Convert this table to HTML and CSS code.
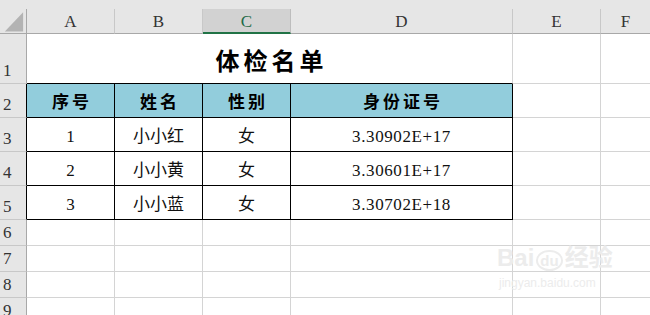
FILE: index.html
```html
<!DOCTYPE html>
<html lang="zh">
<head>
<meta charset="utf-8">
<title>体检名单</title>
<link rel="stylesheet" href="styles.css">
</head>
<body>
<div class="sheet">
  <div class="strip"></div>

  <div class="corner"><svg width="27" height="25" viewBox="0 0 27 25"><polygon points="24,3 24,23 5,23" fill="#b3b3b3"/></svg></div>
  <div class="colhead">A</div>
  <div class="colhead">B</div>
  <div class="colhead active">C</div>
  <div class="colhead">D</div>
  <div class="colhead">E</div>
  <div class="colhead last">F</div>

  <div class="rowhead">1</div>
  <div class="cell title tb">体检名单</div>
  <div class="cell"></div>
  <div class="cell last"></div>

  <div class="rowhead tl">2</div>
  <div class="cell hd tb">序号</div>
  <div class="cell hd tb">姓名</div>
  <div class="cell hd tb">性别</div>
  <div class="cell hd tb">身份证号</div>
  <div class="cell"></div>
  <div class="cell last"></div>

  <div class="rowhead tl">3</div>
  <div class="cell dt tb">1</div>
  <div class="cell dt tb">小小红</div>
  <div class="cell dt tb">女</div>
  <div class="cell dt num tb">3.30902E+17</div>
  <div class="cell"></div>
  <div class="cell last"></div>

  <div class="rowhead tl">4</div>
  <div class="cell dt tb">2</div>
  <div class="cell dt tb">小小黄</div>
  <div class="cell dt tb">女</div>
  <div class="cell dt num tb">3.30601E+17</div>
  <div class="cell"></div>
  <div class="cell last"></div>

  <div class="rowhead tl">5</div>
  <div class="cell dt tb">3</div>
  <div class="cell dt tb">小小蓝</div>
  <div class="cell dt tb">女</div>
  <div class="cell dt num tb">3.30702E+18</div>
  <div class="cell"></div>
  <div class="cell last"></div>

  <div class="rowhead">6</div>
  <div class="cell"></div><div class="cell"></div><div class="cell"></div><div class="cell"></div><div class="cell"></div><div class="cell last"></div>
  <div class="rowhead">7</div>
  <div class="cell"></div><div class="cell"></div><div class="cell"></div><div class="cell"></div><div class="cell"></div><div class="cell last"></div>
  <div class="rowhead">8</div>
  <div class="cell"></div><div class="cell"></div><div class="cell"></div><div class="cell"></div><div class="cell"></div><div class="cell last"></div>
  <div class="rowhead">9</div>
  <div class="cell"></div><div class="cell"></div><div class="cell"></div><div class="cell"></div><div class="cell"></div><div class="cell last"></div>

  <div class="watermark">
    <div class="wm-logo">Bai<span class="wm-du">du</span>经验</div>
    <div class="wm-url">jingyan.baidu.com</div>
  </div>
</div>
</body>
</html>
```

FILE: styles.css
```css
html, body {
  margin: 0;
  padding: 0;
  background: #ffffff;
  overflow: hidden;
}

.sheet {
  position: relative;
  width: 650px;
  height: 315px;
  overflow: hidden;
  display: grid;
  grid-template-columns: 27px 88px 88px 88px 222px 88px 1fr;
  grid-template-rows: 9px 25px 50px 34px 34px 34px 34px 26px 26px 26px 26px;
  font-family: "Liberation Serif", "Noto Sans CJK SC", serif;
  color: #000;
}

.strip {
  grid-column: 1 / -1;
  background: #e6e6e6;
}

.corner {
  background: #e6e6e6;
  border-right: 1px solid #a8a8a8;
  border-bottom: 1px solid #a8a8a8;
  box-sizing: border-box;
  display: flex;
}

.colhead {
  background: #e6e6e6;
  border-right: 1px solid #c8c8c8;
  border-bottom: 1px solid #a8a8a8;
  box-sizing: border-box;
  display: flex;
  align-items: center;
  justify-content: center;
  font-size: 17px;
  color: #333;
  padding-top: 2px;
}

.colhead.active {
  background: #d2d2d2;
  color: #1e6b47;
  border-bottom: 2px solid #217346;
  border-right: 1px solid #bdbdbd;
}

.colhead.last,
.cell.last {
  border-right: none;
}

.rowhead {
  background: #e6e6e6;
  border-right: 1px solid #a8a8a8;
  border-bottom: 1px solid #c8c8c8;
  box-sizing: border-box;
  display: flex;
  align-items: flex-end;
  padding: 0 0 1px 3px;
  font-size: 17px;
  line-height: 22px;
  color: #333;
}

.rowhead.tl {
  border-right-color: #000;
}

.cell {
  border-right: 1px solid #d4d4d4;
  border-bottom: 1px solid #d4d4d4;
  box-sizing: border-box;
  display: flex;
  align-items: flex-end;
  justify-content: center;
}

.cell.tb {
  border-right-color: #000;
  border-bottom-color: #000;
}

.title {
  grid-column: span 4;
  font-family: "Noto Sans CJK SC", sans-serif;
  font-weight: bold;
  font-size: 24px;
  line-height: 30px;
  letter-spacing: 4px;
  padding: 0 0 8px 4px;
  border-right-color: #d4d4d4 !important;
}

.hd {
  background: #92cddc;
  font-family: "Noto Sans CJK SC", sans-serif;
  font-weight: bold;
  font-size: 17px;
  line-height: 22px;
  letter-spacing: 3px;
  padding: 0 0 5px 3px;
}

.dt {
  font-family: "Liberation Serif", "Noto Sans CJK SC", serif;
  font-size: 17px;
  line-height: 20px;
  padding-bottom: 4px;
  color: #111;
}

.num {
  letter-spacing: 0.6px;
}

.watermark {
  position: absolute;
  left: 497px;
  top: 244px;
  color: #ececec;
  font-family: "Liberation Sans", "Noto Sans CJK SC", sans-serif;
  pointer-events: none;
}

.wm-logo {
  font-size: 24px;
  font-weight: bold;
  line-height: 28px;
}

.wm-du {
  font-size: 15px;
  border: 2px solid #ececec;
  border-radius: 50%;
  padding: 0 2px;
  margin: 0 2px;
}

.wm-url {
  font-size: 12px;
  line-height: 16px;
  padding-left: 2px;
}
```
